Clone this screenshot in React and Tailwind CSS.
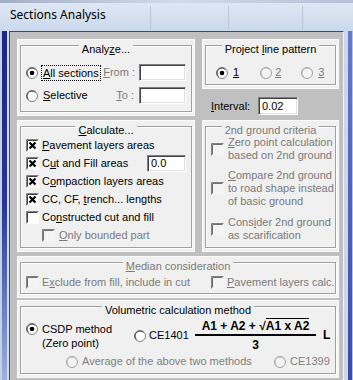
import React from "react";

const font = "font-['Liberation_Sans',Arial,sans-serif] text-[11px] leading-[13px]";

const Radio = ({ checked, disabled }) => (
  <svg width="12" height="12" viewBox="0 0 12 12" className="shrink-0">
    <circle cx="6" cy="6" r="5.5" fill={disabled ? "#f4f4f4" : "#fff"} stroke={disabled ? "#a0a0a0" : "#808080"} />
    <path d="M2.5 9.5 A4.9 4.9 0 0 1 9.5 2.5" stroke={disabled ? "#b8b8b8" : "#404040"} fill="none" />
    {checked && <circle cx="6" cy="6" r="2.3" fill="#000" />}
  </svg>
);

const Check = ({ checked, disabled }) => (
  <svg width="13" height="13" viewBox="0 0 13 13" className="shrink-0">
    <rect x="0" y="0" width="13" height="13" fill={disabled ? "#f4f4f4" : "#fff"} />
    <path d="M0.5 12.5V0.5H12.5" stroke="#808080" fill="none" />
    <path d="M1.5 11.5V1.5H11.5" stroke={disabled ? "#707070" : "#404040"} fill="none" />
    {checked && <path d="M3.5 3.5L9.5 9.5M9.5 3.5L3.5 9.5" stroke="#000" strokeWidth="2.2" />}
  </svg>
);

const Edit = ({ value, className = "" }) => (
  <div
    className={`h-[17px] bg-white border border-t-[#808080] border-l-[#808080] border-b-white border-r-white shadow-[inset_1px_1px_0_#404040,inset_-1px_-1px_0_#e0e0e0] pl-[3px] flex items-center text-black ${className}`}
  >
    {value}
  </div>
);

const Group = ({ title, className = "", disabled, children }) => (
  <div className={`bg-[#f0f0f0] border border-[#fbfbfb] px-[2px] pt-[5px] pb-[3px] ${className}`}>
    <div className="relative h-full border border-[#a0a0a0] shadow-[inset_1px_1px_0_#fff,1px_1px_0_#fff]">
      <div className="absolute -top-[3px] left-0 right-0 flex justify-center">
        <span className={`bg-[#f0f0f0] px-[3px] ${disabled ? "text-[#7a7a7a]" : "text-black"}`}>{title}</span>
      </div>
      {children}
    </div>
  </div>
);

const Gray = "text-[#7a7a7a]";

export default function App() {
  return (
    <div className={`w-[353px] h-[380px] overflow-hidden flex flex-col bg-[#cddbef] ${font}`}>
      {/* title bar */}
      <div className="relative h-[31px] shrink-0 bg-linear-to-b from-[#dfe8f5] to-[#cbd9ed] flex items-center pl-[10px] pb-[2px]">
        <div className="absolute top-0 left-0 right-0 h-[3px] bg-linear-to-r from-[#7d8aa6] via-[#c8d2e4] to-[#9aa6c0] opacity-60" />
        <div className="absolute top-[6px] bottom-[2px] left-[150px] w-px bg-[#b9c6da]" />
        <div className="absolute top-[6px] bottom-[2px] left-[228px] w-px bg-[#b9c6da]" />
        <div className="absolute top-[6px] bottom-[2px] left-[302px] w-px bg-[#b9c6da]" />
        <span className="relative font-['Noto_Sans','Open_Sans',sans-serif] text-[12px] text-black">Sections Analysis</span>
      </div>

      <div className="flex flex-1 min-h-0">
        {/* left frame */}
        <div className="w-[9px] flex shrink-0">
          <div className="w-[2px] bg-[#c3d0e6]" />
          <div className="w-[5px] bg-linear-to-b from-[#1c2785] via-[#27359a] to-[#9db2df]" />
          <div className="w-[2px] bg-[#d3dcea]" />
        </div>

        {/* client area */}
        <div className="w-[335px] shrink-0 border-l border-t border-l-[#404a68] border-t-[#404a68] border-r border-r-[#f2f4f8] bg-[#c0c0c0] pl-[7px] pr-[4px] pt-[7px] flex flex-col">
          {/* row 1 */}
          <div className="flex gap-[7px] h-[77px]">
            <Group title={<>Analy<u>z</u>e...</>} className="w-[178px]">
              <div className="pt-[18px] pl-[5px] pr-[5px] flex flex-col gap-[6px]">
                <div className="flex items-center h-[17px]">
                  <div className="flex items-center flex-1">
                    <Radio checked />
                    <span className="ml-[3px] border border-dotted border-black px-[1px] leading-[14px]">
                      <u>A</u>ll sections
                    </span>
                  </div>
                  <span className={Gray}><u>F</u>rom :</span>
                  <Edit className="w-[47px] ml-[4px]" />
                </div>
                <div className="flex items-center h-[17px]">
                  <div className="flex items-center flex-1">
                    <Radio />
                    <span className="ml-[5px]"><u>S</u>elective</span>
                  </div>
                  <span className={Gray}><u>T</u>o :</span>
                  <Edit className="w-[47px] ml-[5px]" />
                </div>
              </div>
            </Group>

            <div className="w-[137px] flex flex-col">
              <Group title={<>Project <u>l</u>ine pattern</>} className="h-[50px]">
                <div className="pt-[20px] pl-[10px] flex items-center h-[33px]">
                  <Radio checked />
                  <span className="ml-[5px]"><u>1</u></span>
                  <span className="ml-[21px]"><Radio disabled /></span>
                  <span className={`ml-[3px] ${Gray}`}><u>2</u></span>
                  <span className="ml-[20px]"><Radio disabled /></span>
                  <span className={`ml-[5px] ${Gray}`}><u>3</u></span>
                </div>
              </Group>
              <div className="flex items-center mt-[8px] pl-[9px]">
                <span className="w-[47px]"><u>I</u>nterval:</span>
                <Edit value="0.02" className="w-[40px] h-[18px]" />
              </div>
            </div>
          </div>

          {/* row 2 */}
          <div className="flex gap-[7px] h-[132px] mt-[4px]">
            <Group title={<><u>C</u>alculate...</>} className="w-[178px]">
              <div className="pt-[9px] pl-[5px] pr-[5px] flex flex-col">
                <div className="flex items-center h-[18px] gap-[3px]">
                  <Check checked />
                  <span><u>P</u>avement layers areas</span>
                </div>
                <div className="flex items-center h-[18px] gap-[3px]">
                  <Check checked />
                  <span className="flex-1">C<u>u</u>t and Fill areas</span>
                  <Edit value="0.0" className="w-[39px]" />
                </div>
                <div className="flex items-center h-[18px] gap-[3px]">
                  <Check checked />
                  <span>C<u>o</u>mpaction layers areas</span>
                </div>
                <div className="flex items-center h-[18px] gap-[3px]">
                  <Check checked />
                  <span>CC, CF, <u>t</u>rench... lengths</span>
                </div>
                <div className="flex items-center h-[18px] gap-[3px]">
                  <Check />
                  <span>Co<u>n</u>structed cut and fill</span>
                </div>
                <div className="flex items-center h-[18px] gap-[3px] pl-[16px]">
                  <Check disabled />
                  <span className={`ml-[1px] ${Gray}`}><u>O</u>nly bounded part</span>
                </div>
              </div>
            </Group>

            <Group title="2nd ground criteria" disabled className="w-[137px]">
              <div className={`pt-[9px] pl-[5px] flex flex-col gap-[7px] ${Gray}`}>
                <div className="flex items-center gap-[4px]">
                  <Check disabled />
                  <span><u>Z</u>ero point calculation<br />based on 2nd ground</span>
                </div>
                <div className="flex items-center gap-[4px]">
                  <Check disabled />
                  <span><u>C</u>ompare 2nd ground<br />to road shape instead<br />of basic ground</span>
                </div>
                <div className="flex items-center gap-[4px] mt-[1px]">
                  <Check disabled />
                  <span>Cons<u>i</u>der 2nd ground<br />as scarification</span>
                </div>
              </div>
            </Group>
          </div>

          {/* row 3 */}
          <Group title={<><u>M</u>edian consideration</>} disabled className="h-[42px] mt-[4px]">
            <div className={`pt-[13px] pl-[5px] flex items-center ${Gray}`}>
              <div className="w-[185px] flex items-center gap-[3px]">
                <Check disabled />
                <span>E<u>x</u>clude from fill, include in cut</span>
              </div>
              <div className="flex items-center gap-[3px]">
                <Check disabled />
                <span><u>P</u>avement layers calc.</span>
              </div>
            </div>
          </Group>

          {/* row 4 */}
          <Group title="Volumetric calculation method" className="h-[78px] mt-[2px]">
            <div className="pt-[12px] pl-[5px] grid grid-cols-[108px_15px_46px_121px_14px] items-center">
              <div className="flex items-start">
                <span className="mt-[1px]"><Radio checked /></span>
                <span className="ml-[4px] leading-[14px]">CSDP method<br />(Zero point)</span>
              </div>
              <Radio />
              <span>CE1401</span>
              <div className="flex flex-col items-center font-bold text-[12px] leading-[14px] whitespace-nowrap">
                <span>
                  A1 + A2 + √<span className="border-t border-black">A1 x A2</span>
                </span>
                <div className="w-full h-[2px] bg-black mt-[1px]" />
                <span className="mt-[2px]">3</span>
              </div>
              <span className="pl-[7px] font-bold text-[12px]">L</span>
            </div>
            <div className="flex items-center mt-[3px] pl-[45px] text-[#808080]">
              <Radio disabled />
              <span className="ml-[4px] w-[192px]">Average of the above two methods</span>
              <Radio disabled />
              <span className="ml-[4px]">CE1399</span>
            </div>
          </Group>
        </div>

        {/* right frame */}
        <div className="w-[9px] flex shrink-0">
          <div className="w-[4px] bg-[#c9d7ee]" />
          <div className="w-[4px] bg-linear-to-b from-[#6a78c8] to-[#3c4aa8]" />
          <div className="w-[1px] bg-[#b4c2e0]" />
        </div>
      </div>
    </div>
  );
}
